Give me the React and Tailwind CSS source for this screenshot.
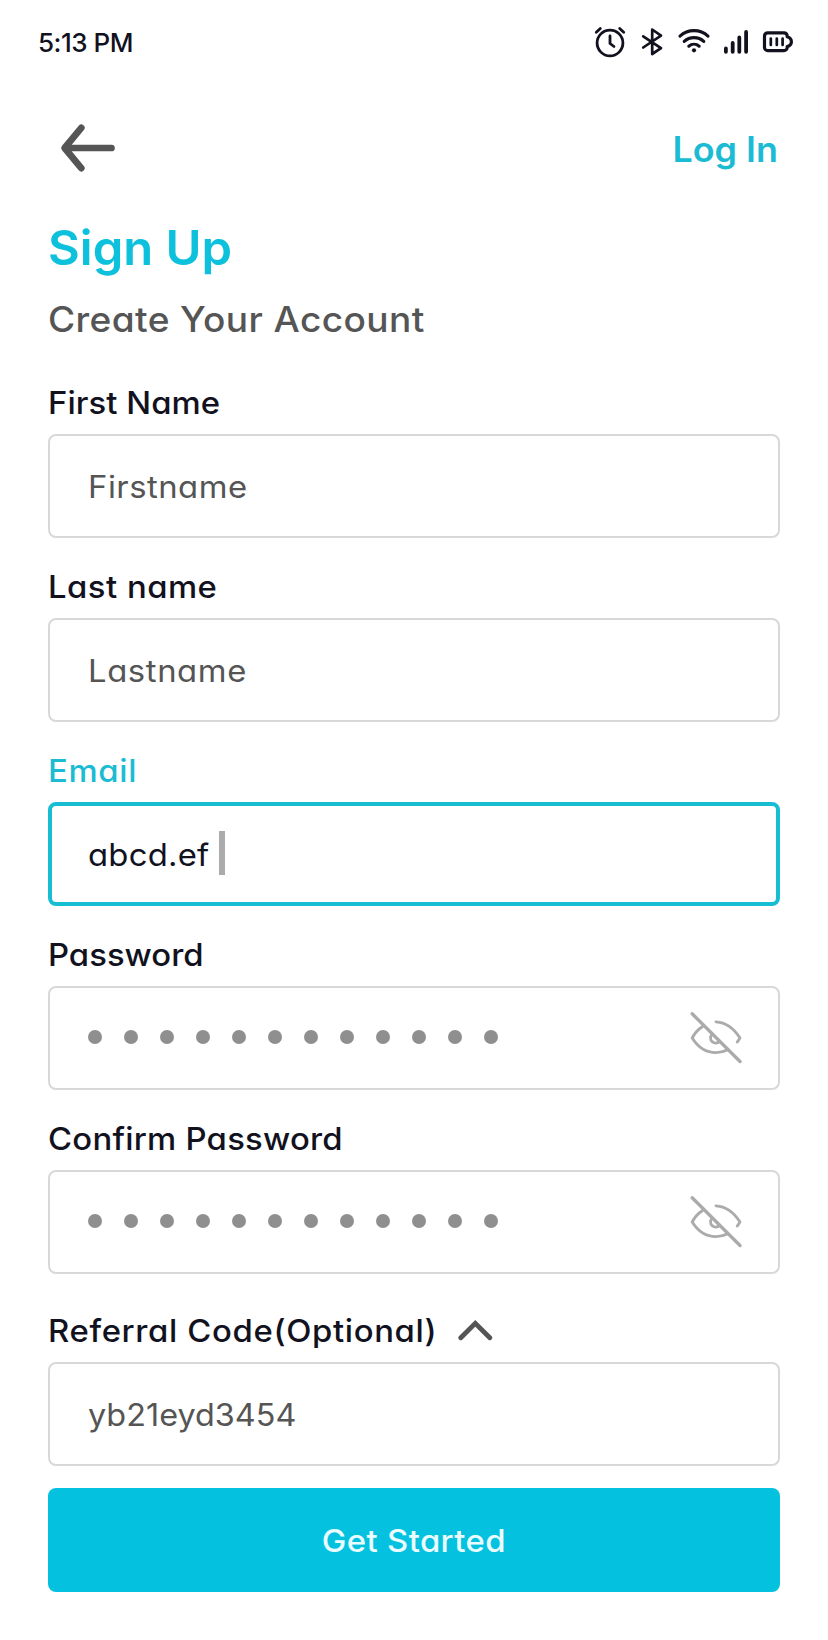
function StatusIcons() {
  return (
    <div className="flex items-center text-[#12121f]">
      <svg width="34" height="34" viewBox="593 25 34 34" fill="none" stroke="currentColor" strokeWidth="2.8" strokeLinecap="round" strokeLinejoin="round">
        <circle cx="610" cy="43" r="12.900" />
        <path d="M610 36v7.500l4 3M596.300 32.300l4-3.800M623.700 32.300l-4-3.800" />
      </svg>
      <svg className="ml-[14px]" width="22" height="34" viewBox="641 25 22 34" fill="none" stroke="currentColor" strokeWidth="2.7" strokeLinecap="round" strokeLinejoin="round">
        <path d="M643.200 36.300L661 48.200L652.200 54V29.500L661 35.600L643.200 47.500" />
      </svg>
      <svg className="ml-[14px]" width="34" height="34" viewBox="677 25 34 34" fill="none" stroke="currentColor" strokeWidth="3.1" strokeLinecap="round">
        <path d="M680 36.200a20.500 20.500 0 0 1 28 0M684.200 41.400a14.500 14.500 0 0 1 19.600 0M688.800 46.200a8 8 0 0 1 10.400 0" />
        <circle cx="694" cy="50.300" r="2.100" fill="currentColor" stroke="none" />
      </svg>
      <svg className="ml-[12px]" width="26" height="34" viewBox="723 25 26 34" fill="none" stroke="currentColor" strokeWidth="3.8" strokeLinecap="round">
        <path d="M725.900 48.500v3.300M732.700 43v8.800M739.300 37.500v14.300M746.100 32v19.800" />
      </svg>
      <svg className="ml-[13px]" width="33" height="34" viewBox="762 25 33 34" fill="none" stroke="currentColor" strokeWidth="3.200" strokeLinejoin="round" strokeLinecap="round">
        <path d="M767.700 32.800h16.300a3.200 3.200 0 0 1 3.200 3.200v.8c2.800.8 4.200 2.400 4.200 4.900s-1.400 4.100-4.200 4.900v.8a3.200 3.200 0 0 1-3.200 3.200h-16.300a3.200 3.200 0 0 1-3.200-3.200v-11.400a3.200 3.200 0 0 1 3.200-3.200z" />
        <path strokeWidth="2.700" d="M770.800 38.500v6.500M776.800 38.500v6.500M782.600 38.500v6.500" />
      </svg>
    </div>
  );
}

function EyeOff() {
  return (
    <svg width="54" height="54" viewBox="689 1011 54 54" fill="none" stroke="#ababab" strokeWidth="2.900" strokeLinecap="round" strokeLinejoin="round">
      <path d="M702.500 1026.500C698 1029.500 694.500 1033.500 692.200 1038C697.500 1046.500 705.500 1052.600 716 1052.600C720.300 1052.600 724 1051.600 727.300 1050" />
      <path d="M716 1021.900C726.500 1022.400 734.500 1029.500 740 1038L737.300 1042" />
      <path d="M712 1034.500a5 5 0 1 0 7.500 7" />
      <path strokeWidth="3.400" d="M692.200 1013.800L740 1061.500" />
    </svg>
  );
}

function Chevron() {
  return (
    <svg className="ml-[42px]" width="36" height="26" viewBox="457 1318 36 26" fill="none" stroke="#555" strokeWidth="4.800" strokeLinecap="round">
      <path d="M460.800 1337.700L475.300 1323.300L489.800 1337.700" />
    </svg>
  );
}

function Field({ label, active, children }) {
  return (
    <div>
      <div className={"flex h-[42px] items-center text-[31px] font-medium whitespace-nowrap " + (active ? "text-[#1bbcd3]" : "text-[#12121f]")}>
        {label}
      </div>
      <div
        className={
          "mt-[10px] flex h-[104px] w-full items-center rounded-lg text-[31px] whitespace-nowrap " +
          (active ? "border-4 border-[#16bdd3] pl-[36px]" : "border-2 border-[#d8d8d8] pl-[38px]")
        }
      >
        {children}
      </div>
    </div>
  );
}

function Wide({ className = "", children }) {
  return <span className={"inline-block origin-left scale-x-[1.06] " + className}>{children}</span>;
}

function PasswordDots() {
  return (
    <div className="flex flex-1 items-center justify-between pr-[35px]">
      <div className="flex gap-[22px] pb-[2px]">
        {Array.from({ length: 12 }, (_, i) => (
          <span key={i} className="size-[14px] rounded-full bg-[#8f8f8f]" />
        ))}
      </div>
      <EyeOff />
    </div>
  );
}

export default function App() {
  return (
    <main className="h-[1640px] w-[828px] bg-white px-12 font-['Inter','Open_Sans',sans-serif] [font-feature-settings:'cv11','ss03']">
      <header className="-mx-12 flex h-[84px] items-center justify-between pr-[33px] pl-[38px]">
        <span className="text-[26px] font-medium tracking-[-0.5px] text-[#12121f]">5:13 PM</span>
        <StatusIcons />
      </header>
      <nav className="flex h-[128px] items-center justify-between pr-[2px]">
        <svg className="ml-[11px]" width="60" height="50" viewBox="59 123 60 50" fill="none" stroke="#555" strokeWidth="6.700" strokeLinecap="round" strokeLinejoin="round">
          <path d="M81.300 127.800L64.600 148L81.300 168.200M65 148H111.500" />
        </svg>
        <a className="origin-right scale-x-[1.025] pt-[3px] text-[35px] font-semibold text-[#1bbcd3]">Log In</a>
      </nav>
      <h1 className="h-[80px] origin-left scale-x-[1.02] text-[48px] font-semibold text-[#0dc1dc]">Sign Up</h1>
      <h2 className="h-[50px] text-[35px] font-medium text-[#555]">
        <Wide className="pt-px tracking-[0.35px]">Create Your Account</Wide>
      </h2>
      <form className="mt-[40px] flex flex-col gap-[28px]">
        <Field label={<Wide className="tracking-[0.05px]">First Name</Wide>}>
          <Wide className="pt-[2px] tracking-[0.45px] text-[#555]">Firstname</Wide>
        </Field>
        <Field label={<Wide className="tracking-[0.45px]">Last name</Wide>}>
          <Wide className="pt-[2px] tracking-[0.55px] text-[#555]">Lastname</Wide>
        </Field>
        <Field active label={<Wide className="tracking-[0.6px]">Email</Wide>}>
          <Wide className="pt-[2px] tracking-[0.2px] text-[#12121f]">abcd.ef</Wide>
          <span className="mb-[2px] ml-[16.5px] h-[44px] w-[6px] bg-[#ababab]" />
        </Field>
        <Field label={<Wide>Password</Wide>}>
          <PasswordDots />
        </Field>
        <Field label={<Wide className="tracking-[0.22px]">Confirm Password</Wide>}>
          <PasswordDots />
        </Field>
        <div className="mt-[8px]">
          <Field
            label={
              <>
                <Wide className="tracking-[0.6px]">Referral Code(Optional)</Wide>
                <Chevron />
              </>
            }
          >
            <span className="inline-block origin-left scale-x-[1.045] pt-[2px] text-[#555]">yb21eyd3454</span>
          </Field>
        </div>
      </form>
      <button className="mt-[22px] flex h-[104px] w-full items-center justify-center rounded-lg bg-[#04c2df] pt-[2px] text-[31px] font-medium text-[#e9fcff]">
        <span className="inline-block scale-x-[1.06] tracking-[0.35px]">Get Started</span>
      </button>
    </main>
  );
}
